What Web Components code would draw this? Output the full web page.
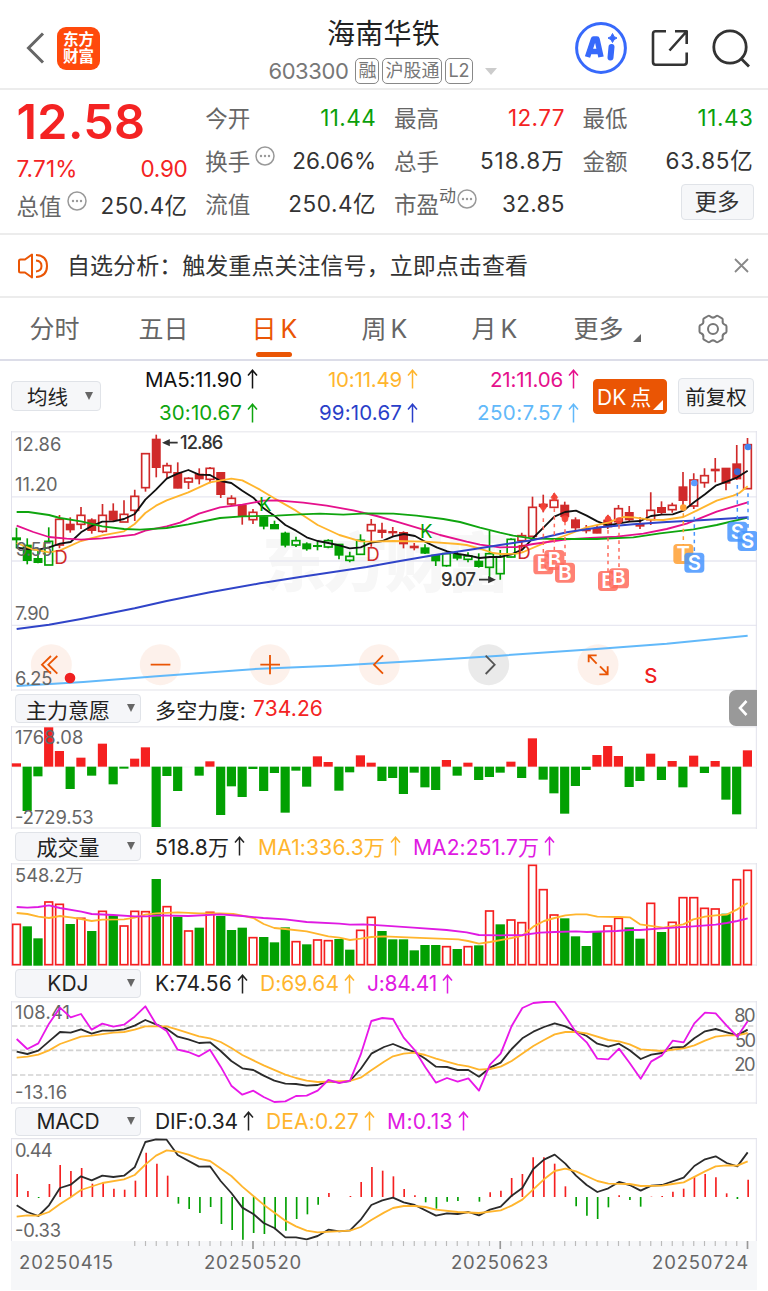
<!DOCTYPE html>
<html lang="zh-CN">
<head>
<meta charset="utf-8">
<title>海南华铁</title>
<style>
  body {
    margin: 0;
    width: 768px;
    height: 1291px;
    overflow: hidden;
    background: #fff;
    color: #333;
    font-family: Inter, "Noto Sans CJK SC", sans-serif;
  }
</style>
</head>
<body>
<stock-app></stock-app>

<script>
// Text that spreads its letter spacing so that it fills a given width
class FitText extends HTMLElement {
  constructor() {
    super();
    this.attachShadow({ mode: "open" });
    this.shadowRoot.innerHTML = `
      <style>
        :host { display: inline-block; white-space: nowrap; flex: none; }
        span { display: inline-block; }
      </style>
      <span><slot></slot></span>`;
  }

  connectedCallback() {
    const width = Number(this.getAttribute("w"));
    const count = this.textContent.length;
    if (!width || !count) return;
    const natural = this.shadowRoot.querySelector("span").getBoundingClientRect().width;
    this.style.letterSpacing = (width - natural) / count + "px";
    this.style.width = width + "px";
  }
}

class UpArrow extends HTMLElement {
  constructor() {
    super();
    this.attachShadow({ mode: "open" });
    this.shadowRoot.innerHTML = `
      <style>
        :host { display: inline-block; width: 11px; height: 20px; flex: none; }
        svg { display: block; }
      </style>
      <svg width="11" height="20" fill="none" stroke="currentColor" stroke-width="1.5">
        <path d="M5.5 19.5V1M1 6.5L5.5 1.2L10 6.5"/>
      </svg>`;
  }
}

class InfoDot extends HTMLElement {
  constructor() {
    super();
    this.attachShadow({ mode: "open" });
    this.shadowRoot.innerHTML = `
      <style>
        :host { display: block; width: 20px; height: 20px; flex: none; }
        svg { display: block; }
      </style>
      <svg width="20" height="20" fill="#999">
        <circle cx="10" cy="10" r="9" fill="none" stroke="#999" stroke-width="1.5"/>
        <circle cx="6" cy="10" r="1.2"/><circle cx="10" cy="10" r="1.2"/><circle cx="14" cy="10" r="1.2"/>
      </svg>`;
  }
}

class StockHeader extends HTMLElement {
  constructor() {
    super();
    this.attachShadow({ mode: "open" });
    this.shadowRoot.innerHTML = `
      <style>
        :host {
          display: grid;
          grid-template-columns: 1fr 260px 1fr;
          height: 90px;
          box-sizing: border-box;
          border-bottom: 2px solid #ececec;
        }
        .left { display: flex; align-items: center; padding: 8px 0 0 26px; gap: 12px; }
        .logo {
          width: 43px; height: 43px; box-sizing: border-box; padding-top: 4px;
          border-radius: 9px; background: #ff4a0c; color: #fff;
          font-size: 15.5px; font-weight: 700; line-height: 17.5px; text-align: center;
        }
        .middle { display: flex; flex-direction: column; align-items: center; padding-top: 14px; }
        .name { font-size: 28px; line-height: 40px; color: #222; margin-left: -1px; }
        .code { display: flex; align-items: center; height: 34px; gap: 3px; font-size: 22px; color: #777; margin-left: -3px; }
        .code > fit-text { margin-right: 4px; }
        .tag {
          height: 26px; line-height: 24px; box-sizing: border-box; padding: 0 2px;
          border: 1.5px solid #888; border-radius: 5px; font-size: 18px;
        }
        .caret { border: 6px solid transparent; border-top: 7px solid #ccc; border-bottom: 0; margin-left: 9px; }
        .right { display: flex; align-items: center; justify-content: flex-end; padding: 8px 17px 0 0; gap: 23px; }
        svg { display: block; flex: none; }
      </style>
      <div class="left">
        <svg width="19" height="32" fill="none" stroke="#666" stroke-width="3"><path d="M17 1.5L2.5 16L17 30.5"/></svg>
        <div class="logo">东方<br>财富</div>
      </div>
      <div class="middle">
        <div class="name"><fit-text w="113">海南华铁</fit-text></div>
        <div class="code">
          <fit-text w="80">603300</fit-text>
          <span class="tag">融</span><span class="tag">沪股通</span><span class="tag">L2</span>
          <i class="caret"></i>
        </div>
      </div>
      <div class="right">
        <svg width="52" height="52" fill="none" stroke="#3769fb" style="margin-right:1px">
          <circle cx="26" cy="26" r="24.4" stroke-width="3"/>
          <path d="M12.5 35L18.5 17H22L26 35M14 29.5H24" stroke-width="5.5" stroke-linejoin="round"/>
          <path d="M36.5 25L35.5 35.5" stroke-width="6" stroke-linecap="round"/>
          <path d="M37.5 11.5Q38.5 15.5 42 16Q38.5 17 37.5 20.5Q36.5 17 33 16Q36.5 15.5 37.5 11.5Z" fill="#3769fb" stroke-width="1"/>
        </svg>
        <svg width="38" height="38" fill="none" stroke="#333" stroke-width="2.6" stroke-linejoin="round">
          <path d="M15 2.3H4.5Q2 2.3 2 5V33Q2 35.7 4.5 35.7H33Q35.7 35.7 35.7 33V23.5M24 2.3H35.7V15M35.5 2.5L18.5 21.5"/>
        </svg>
        <svg width="39" height="39" fill="none" stroke="#333" stroke-width="2.8">
          <circle cx="18" cy="18" r="16.2"/><path d="M29.5 30L37 37.5"/>
        </svg>
      </div>`;
  }
}

class QuoteBoard extends HTMLElement {
  constructor() {
    super();
    this.attachShadow({ mode: "open" });
    this.shadowRoot.innerHTML = `
      <style>
        :host {
          display: grid;
          grid-template-columns: repeat(4, 171px);
          column-gap: 17.7px;
          height: 145px;
          box-sizing: border-box;
          padding: 6px 15px 0 16.5px;
          border-bottom: 2px solid #ececec;
          font-size: 22.5px;
        }
        .row { display: flex; justify-content: space-between; align-items: center; height: 43px; color: #666; }
        .row b { font-weight: 400; color: #333; margin-top: -3px; }
        .label { display: flex; align-items: center; margin-top: -2px; }
        .label info-dot { margin: -8px 0 0 5px; }
        .price { height: 51px; line-height: 51px; font-size: 48.5px; font-weight: 600; color: #f42323; }
        .row .up, .up { color: #f42323; }
        .row .down { color: #0a9f0a; }
        .first .change { height: 43px; }
        .first .row:last-child { height: 31px; }
        sup { font-size: 17px; line-height: 17px; margin-top: -12px; vertical-align: baseline; }
        .label sup + info-dot { margin-left: 1px; }
        button {
          width: 73px; height: 36px; padding: 0; margin-left: auto; font: inherit; color: #333; margin-top: -3px;
          border: 1.5px solid #e0e3e8; border-radius: 4px; background: #f6f7f9; line-height: 30px;
        }
      </style>
      <div class="first">
        <div class="price"><fit-text w="129">12.58</fit-text></div>
        <div class="row change"><fit-text class="up" w="61">7.71%</fit-text><fit-text class="up" w="47">0.90</fit-text></div>
        <div class="row"><span class="label">总值<info-dot></info-dot></span><b><fit-text w="87">250.4亿</fit-text></b></div>
      </div>
      <div>
        <div class="row"><span class="label">今开</span><fit-text class="down" w="56">11.44</fit-text></div>
        <div class="row"><span class="label">换手<info-dot></info-dot></span><fit-text w="84" style="color:#333;margin-top:-1px">26.06%</fit-text></div>
        <div class="row"><span class="label">流值</span><b><fit-text w="88">250.4亿</fit-text></b></div>
      </div>
      <div>
        <div class="row"><span class="label">最高</span><fit-text class="up" w="57">12.77</fit-text></div>
        <div class="row"><span class="label">总手</span><b><fit-text w="85">518.8万</fit-text></b></div>
        <div class="row"><span class="label">市盈<sup>动</sup><info-dot></info-dot></span><fit-text w="63" style="color:#333">32.85</fit-text></div>
      </div>
      <div>
        <div class="row"><span class="label">最低</span><fit-text class="down" w="56">11.43</fit-text></div>
        <div class="row"><span class="label">金额</span><b><fit-text w="88">63.85亿</fit-text></b></div>
        <div class="row"><button>更多</button></div>
      </div>`;
  }
}

class NoticeBar extends HTMLElement {
  constructor() {
    super();
    this.attachShadow({ mode: "open" });
    this.shadowRoot.innerHTML = `
      <style>
        :host {
          display: flex; align-items: center; height: 63px; box-sizing: border-box;
          padding: 0 19px 0 17px; border-bottom: 2px solid #ececec; font-size: 23px; color: #333;
        }
        .text { margin: -4px 0 0 18px; flex: 1; }
      </style>
      <svg width="32" height="26" fill="none" stroke="#ea5504" stroke-width="2">
        <path d="M8 6.5L15 1.5V24.5L8 19.5H3.5Q2 19.5 2 18V8Q2 6.5 3.5 6.5Z" stroke-linejoin="round"/>
        <path d="M19 2Q30 2.5 30 13T19 24M19 7.5Q24.5 8 24.5 13T19 18.5"/>
      </svg>
      <div class="text"><fit-text w="461">自选分析：触发重点关注信号，立即点击查看</fit-text></div>
      <svg width="15" height="15" stroke="#888" stroke-width="1.8"><path d="M1 1L14 14M14 1L1 14"/></svg>`;
  }
}

class PeriodTabs extends HTMLElement {
  constructor() {
    super();
    this.attachShadow({ mode: "open" });
    this.shadowRoot.innerHTML = `
      <style>
        :host {
          display: grid;
          grid-template-columns: 109px 109px 113px 107px 113px 101px 1fr;
          height: 63px; box-sizing: border-box; border-bottom: 2px solid #dcdde8;
          font-size: 25px; color: #666; line-height: 63px; text-align: center; word-spacing: -3px;
        }
        .active { color: #ea5504; position: relative; }
        .active::after {
          content: ""; position: absolute; left: 38px; bottom: 4px;
          width: 36px; height: 5px; border-radius: 3px; background: #ea5504;
        }
        .more { display: flex; justify-content: center; gap: 9px; margin-right: -11px; height: 61px; }
        .more i { align-self: flex-end; margin-bottom: 17px; border: 4px solid; border-color: transparent #666 #666 transparent; }
        .gear { display: flex; align-items: center; justify-content: center; padding: 0 0 0 6px; height: 61px; }
      </style>
      <span>分时</span>
      <span>五日</span>
      <span class="active">日 K</span>
      <span>周 K</span>
      <span>月 K</span>
      <span class="more">更多<i></i></span>
      <span class="gear">
        <svg width="32" height="30" fill="none" stroke="#777" stroke-width="2">
          <path d="M11 2Q12 1.4 13 2.2Q16 5 19 2.2Q20 1.4 21 2L25 4.3Q26 5 25.7 6.2Q25 9.8 28 10.7Q29.5 11.1 29.5 12.4V17.6Q29.5 18.9 28 19.3Q25 20.2 25.7 23.8Q26 25 25 25.7L21 28Q20 28.6 19 27.8Q16 25 13 27.8Q12 28.6 11 28L7 25.7Q6 25 6.3 23.8Q7 20.2 4 19.3Q2.5 18.9 2.5 17.6V12.4Q2.5 11.1 4 10.7Q7 9.8 6.3 6.2Q6 5 7 4.3Z"/>
          <circle cx="16" cy="15" r="5"/>
        </svg>
      </span>`;
  }
}

class MaLegend extends HTMLElement {
  constructor() {
    super();
    this.attachShadow({ mode: "open" });
    this.shadowRoot.innerHTML = `
      <style>
        :host { display: flex; align-items: center; height: 70px; padding: 0 15px 0 11px; font-size: 20.5px; }
        .box {
          display: flex; align-items: center; box-sizing: border-box; flex: none;
          border: 1.5px solid #e0e3e8; border-radius: 4px; background: #f6f7f9; color: #222;
        }
        .select { width: 90px; height: 30px; padding-left: 15px; gap: 17px; }
        .select i { border: 4.5px solid transparent; border-top: 8px solid #666; border-bottom: 0; }
        .values {
          display: grid; grid-template-columns: 157px 160px 161px; grid-template-rows: 33px 34px;
          align-items: center; justify-items: end; width: 478px;
        }
        .values span { display: flex; align-items: center; gap: 5px; }
        .dk {
          width: 74px; height: 35px; margin-left: 14px; padding-left: 3px; color: #fff; background: #ea5504;
          border-color: #ea5504; position: relative; font-size: 21px; word-spacing: -2px;
        }
        .dk::after {
          content: ""; position: absolute; right: 3px; bottom: 3px;
          border: 5px solid; border-color: transparent #fff #fff transparent;
        }
        .adjust { width: 76px; height: 36px; margin-left: 11px; justify-content: center; }
      </style>
      <div class="box select">均线<i></i></div>
      <div class="values">
        <span style="color:#111"><fit-text w="97">MA5:11.90</fit-text><up-arrow></up-arrow></span>
        <span style="color:#ffb52d"><fit-text w="74">10:11.49</fit-text><up-arrow></up-arrow></span>
        <span style="color:#e5108c"><fit-text w="73">21:11.06</fit-text><up-arrow></up-arrow></span>
        <span style="color:#0fa50f"><fit-text w="83">30:10.67</fit-text><up-arrow></up-arrow></span>
        <span style="color:#2a3fc9"><fit-text w="83">99:10.67</fit-text><up-arrow></up-arrow></span>
        <span style="color:#62b9fa"><fit-text w="86">250:7.57</fit-text><up-arrow></up-arrow></span>
      </div>
      <div class="box dk">DK 点</div>
      <div class="box adjust">前复权</div>`;
  }
}

// Title row above a sub chart: a select box, then its readings in the slot
class IndicatorBar extends HTMLElement {
  constructor() {
    super();
    this.attachShadow({ mode: "open" });
    this.shadowRoot.innerHTML = `
      <style>
        :host { display: flex; align-items: center; height: 35px; padding-left: 15px; font-size: 21px; color: #222; }
        :host([short]) { height: 34px; }
        .box {
          display: flex; align-items: center; justify-content: center; position: relative;
          width: 126px; height: 29px; box-sizing: border-box; padding-right: 20px; margin-right: 14px;
          border: 1.5px solid #e0e3e8; border-radius: 4px; background: #f5f6f9; flex: none;
        }
        i {
          position: absolute; right: 5px; top: 9px;
          border: 4.5px solid transparent; border-top: 8px solid #666; border-bottom: 0;
        }
        .values { display: flex; align-items: center; flex: 1; }
      </style>
      <div class="box"><span></span><i></i></div>
      <div class="values"><slot></slot></div>`;
  }

  connectedCallback() {
    this.shadowRoot.querySelector("span").textContent = this.getAttribute("name");
  }
}

// Chart geometry: three units to the pixel, candles 32.25 units apart
const FIRST_X = 49.5;
const STEP = 32.25;
const RED = "#d02a2a";
const GREEN = "#02a002";
const xAt = (i) => FIRST_X + i * STEP;

// kind, high, body top, body bottom, low (capital letter = filled body)
const candles = `G 308 338 345 370|G 340 360 407 418|G 370 400 413 415|g 307 349 420 420|r 270 283 360 370|
R 277 297 315 323|r 246 271 298 312|R 280 284 317 326|r 237 271 319 323|R 235 258 286 288|r 226 268 291 291|
r 194 214 256 288|r 86 86 188 200|R 29 42 128 157|r 113 122 142 160|R 112 142 190 190|r 157 160 171 192|
R 130 147 162 178|r 126 130 163 175|R 142 142 209 219|r 211 220 237 243|R 240 240 272 299|r 252 262 284 297|
G 275 275 304 313|G 287 298 312 312|G 320 324 361 367|g 335 347 360 366|G 352 356 372 377|G 348 361 363 376|
g 343 347 366 370|G 357 357 391 403|g 380 394 406 412|g 328 346 388 388|r 282 299 317 365|R 293 315 323 340|
R 306 319 324 335|R 319 322 357 370|R 354 363 369 376|G 358 368 385 387|G 388 390 408 423|g 384 386 422 425|
G 380 388 400 406|g 382 393 403 412|G 385 408 425 428|g 318 386 427 460|g 375 395 446 464|g 340 343 396 397|
r 323 332 347 372|r 215 247 334 334|R 209 237 245 262|r 205 226 247 247|R 230 240 275 290|R 277 284 309 318|
R 300 312 318 325|R 300 310 325 325|R 270 285 306 312|r 240 251 290 296|R 243 262 285 290|R 276 297 304 312|
r 202 256 284 300|R 229 247 263 270|r 233 241 254 263|R 141 185 227 240|r 145 165 243 252|r 130 152 173 188|
R 99 132 138 172|R 129 129 175 196|R 60 116 162 165|r 39 59 191 191`.split("|").map((row) => row.trim().split(" "));

const force = [220,363,259,112,183,297,203,257,161,283,236,206,172,411,258,303,230,257,214,375,289,321,237,303,249,368,242,290,199,216,302,247,196,218,273,264,312,248,292,300,210,257,218,270,261,248,215,264,145,269,310,371,288,240,195,168,198,291,273,191,270,213,292,197,249,213,329,373,181];

const volume = "281r 289g 325g 214r 221r 282g 263r 303g 242r 256g 286r 242r 243r 147g 228r 260g 301r 293g 245r 258g 300g 293g 321r 321g 337g 292g 333r 343g 328r 330r 327g 359g 299r 260r 303g 328g 328g 361g 345g 345g 348r 357g 348r 346g 241r 283g 268r 276r 104r 177r 253r 265g 319g 348g 306g 286r 263r 292g 326g 218r 306g 275r 201r 201r 233r 235r 251g 147r 119r".split(" ");

const macd = [618,669,690,648,591,609,600,647,643,662,665,638,554,587,623,707,723,735,717,768,786,815,795,798,784,788,753,739,710,675,687,684,642,597,608,625,663,682,703,722,701,699,687,701,673,668,630,618,568,568,587,655,715,743,753,718,682,696,716,686,684,671,662,626,618,628,676,693,635];

const lines = {
  ma5: "50,368 81,372 115,374 147,367 180,356 212,351 243,322 275,303 307,290 340,289 372,282 404,267 436,224 468,194 500,161 533,146 565,135 597,149 630,150 662,168 694,174 727,197 760,218 791,250 823,272 856,300 888,317 920,337 953,348 985,354 1018,361 1049,370 1082,367 1114,353 1147,348 1180,334 1212,327 1245,333 1277,351 1310,367 1342,379 1375,387 1407,392 1439,399 1470,396 1500,396 1534,388 1567,374 1598,340 1631,307 1663,275 1695,261 1728,257 1760,272 1792,289 1823,301 1857,295 1889,290 1921,288 1953,273 1985,269 2018,268 2050,257 2082,232 2115,208 2147,182 2180,170 2212,157 2243,137",
  ma10: "50,354 95,372 147,382 180,376 243,348 307,331 372,319 404,297 436,264 468,242 500,226 565,202 630,172 694,161 727,166 780,194 823,220 888,257 953,300 1018,330 1082,349 1114,350 1180,348 1277,350 1374,357 1400,360 1439,371 1480,384 1503,387 1550,386 1570,381 1630,355 1700,330 1760,307 1823,293 1870,276 1900,277 1950,284 1990,285 2050,276 2090,257 2150,227 2200,212 2218,204 2243,184",
  ma21: "50,302 100,321 147,336 200,341 243,344 307,340 404,329 436,317 500,304 540,293 597,266 660,247 727,239 760,233 790,227 830,226 910,233 980,242 1060,256 1130,273 1200,293 1270,314 1320,330 1400,350 1440,359 1500,367 1550,366 1600,357 1700,343 1770,339 1850,335 1930,326 2000,312 2060,296 2150,260 2243,232",
  ma30: "50,261 85,261 147,270 180,279 243,289 307,304 372,312 420,314 500,309 565,298 660,279 727,274 830,272 900,268 960,266 1030,269 1100,265 1180,266 1250,272 1330,282 1380,291 1440,308 1500,323 1540,332 1600,341 1700,342 1790,342 1900,337 1980,325 2080,313 2150,300 2243,278",
  ma99: "50,612 147,599 243,582 404,550 500,528 630,502 780,475 800,472 900,456 1000,441 1100,426 1200,408 1300,391 1400,376 1500,360 1600,345 1700,322 1800,307 1900,298 2000,291 2100,286 2200,280 2243,277",
  ma250: "50,783 250,771 470,754 780,731 1000,722 1250,708 1500,692 1800,671 2000,656 2243,632",
  vol1: "50,249 82,252 115,260 147,264 180,258 212,262 244,267 275,273 307,269 372,268 404,263 436,254 468,250 533,247 597,250 660,250 700,252 727,257 760,264 791,282 823,294 856,297 920,304 985,319 1018,323 1050,330 1082,326 1114,321 1152,319 1240,323 1375,328 1404,333 1437,341 1470,336 1535,324 1567,317 1600,290 1632,273 1664,264 1696,256 1728,253 1760,253 1792,260 1857,261 1889,262 1920,283 1990,293 2050,283 2080,268 2115,260 2147,256 2180,254 2212,238 2243,219",
  vol2: "50,231 82,233 115,231 147,226 180,234 244,245 275,252 340,255 404,259 440,259 480,256 565,258 660,253 727,258 790,264 856,268 920,276 1018,281 1050,284 1090,283 1152,287 1240,293 1340,300 1400,307 1437,315 1500,316 1567,315 1620,308 1664,306 1728,304 1760,306 1850,303 1889,300 1920,300 1985,295 2080,289 2147,284 2180,279 2212,273 2243,265",
  k: "50,251 82,258 115,248 147,220 180,192 212,194 243,184 275,197 307,188 340,188 372,184 404,173 436,156 468,169 500,182 533,206 565,214 597,225 630,223 662,249 694,279 727,301 760,306 791,323 823,338 856,347 888,348 920,353 953,351 985,340 1018,343 1050,339 1082,303 1114,257 1152,237 1179,228 1211,241 1244,252 1276,272 1308,296 1341,297 1373,306 1405,306 1437,326 1470,299 1502,284 1535,243 1567,211 1600,191 1632,177 1664,166 1696,175 1728,190 1760,204 1792,227 1825,236 1857,227 1889,247 1922,273 1954,260 1986,255 2018,238 2051,237 2083,211 2115,190 2147,183 2180,193 2212,202 2243,185",
  d: "50,269 82,266 115,260 147,247 180,228 243,206 275,203 340,194 372,192 404,185 436,175 500,175 533,185 597,205 630,211 662,222 694,240 727,261 791,292 856,320 888,330 920,338 953,342 1050,339 1082,329 1114,307 1152,281 1179,265 1211,257 1244,254 1276,261 1308,272 1373,290 1405,295 1437,305 1470,303 1502,296 1535,279 1600,234 1632,216 1664,199 1696,192 1728,192 1760,196 1825,216 1857,220 1889,229 1922,244 1986,249 2051,241 2083,232 2115,218 2147,206 2180,202 2212,202 2243,195",
  j: "50,213 82,243 115,226 147,167 180,119 212,148 243,138 275,185 307,167 340,176 372,170 404,146 436,115 468,168 500,189 533,245 565,252 597,265 630,245 662,296 694,353 727,380 760,368 791,387 823,402 856,400 888,384 920,383 953,368 985,336 1018,345 1050,338 1082,260 1114,159 1147,150 1179,153 1211,209 1244,246 1276,298 1308,344 1341,330 1373,341 1405,331 1437,368 1470,290 1502,257 1535,174 1567,120 1600,105 1632,102 1664,101 1696,145 1728,193 1760,223 1792,272 1825,274 1857,242 1889,285 1922,332 1954,280 1986,262 2018,218 2051,223 2083,166 2115,134 2147,136 2180,173 2212,206 2243,160",
  dif: "50,712 82,732 115,744 147,712 180,660 212,650 243,625 275,637 307,623 340,627 372,623 404,598 436,522 468,514 500,515 533,561 597,596 630,595 662,639 694,675 727,719 760,738 791,765 823,780 856,808 888,808 920,814 953,804 985,785 1018,790 1050,787 1082,755 1114,711 1147,697 1179,689 1211,703 1244,711 1308,743 1341,736 1373,738 1405,732 1437,742 1470,725 1502,716 1535,683 1567,660 1600,603 1632,575 1664,560 1696,587 1728,623 1760,651 1792,672 1825,661 1857,642 1889,651 1922,668 1954,653 1986,651 2051,629 2083,594 2115,574 2147,565 2180,585 2212,595 2243,553",
  dea: "50,746 82,742 115,743 147,732 180,708 212,688 243,666 307,645 372,634 404,621 436,590 468,563 500,547 533,551 565,560 597,572 630,579 694,624 727,656 791,710 856,758 888,775 920,788 953,793 1050,788 1082,777 1114,756 1152,734 1179,720 1211,714 1244,714 1276,717 1308,725 1373,732 1437,735 1502,727 1535,713 1567,695 1632,634 1664,609 1696,602 1728,610 1792,639 1825,647 1889,648 1922,654 1986,653 2018,648 2051,643 2115,610 2147,595 2180,592 2212,593 2243,580",
};

const line = (name, color, width = 5.5) =>
  `<polyline points="${lines[name]}" fill="none" stroke="${color}" stroke-width="${width}" stroke-linejoin="round"/>`;

const label = (x, y, text, width) =>
  `<text x="${x}" y="${y}" font-size="55" fill="#666" textLength="${width}">${text}</text>`;

const frame = (top, height) =>
  `<path d="M33 ${top + 2}H2271M33 ${top + height - 3}H2271" stroke="#ededf1" stroke-width="5"/>
   <path d="M34.5 ${top}V${top + height}M2269 ${top}V${top + height}" stroke="#e2e2ec" stroke-width="3"/>`;

const charts = {
  price: {
    top: 18,
    height: 780,
    draw() {
      const sticks = candles.map(([kind, high, top, bottom, low], i) => {
        const x = xAt(i);
        const color = kind.toLowerCase() === "r" ? RED : GREEN;
        if (kind === "R" || kind === "G") {
          return `<path d="M${x} ${high}V${low}" stroke="${color}" stroke-width="5"/>
            <rect x="${x - 13.5}" y="${top - 1}" width="27" height="${Math.max(6, bottom - top + 2)}" fill="${color}"/>`;
        }
        return `<path d="M${x} ${high}V${top}M${x} ${bottom}V${low}" stroke="${color}" stroke-width="5"/>
          <rect x="${x - 11.5}" y="${top}" width="23" height="${bottom - top}" fill="none" stroke="${color}" stroke-width="5"/>`;
      }).join("");

      const dash = (x, y1, y2, color) =>
        `<path d="M${x} ${y1}V${y2}" stroke="${color}" stroke-width="4.5" stroke-dasharray="11 12"/>`;
      const badge = (x, y, letter, color) =>
        `<rect x="${x - 30}" y="${y - 30}" width="60" height="60" rx="11" fill="${color}" fill-opacity=".85"/>
         <text x="${x}" y="${y + 21}" font-size="61" font-weight="600" fill="#fff" text-anchor="middle">${letter}</text>`;
      const dot = (x, y, color, r = 10) => `<circle cx="${x}" cy="${y}" r="${r}" fill="${color}"/>`;
      const pink = "#ff6b5c";
      const blue = "#4795ff";
      const orange = "#ffa033";
      const disc = (x, fill = "#fdf0e9") => `<circle cx="${x}" cy="719" r="61.5" fill="${fill}" fill-opacity=".9"/>`;

      return `
        <text x="786" y="484" font-size="192" font-weight="900" fill="#f7f7f7" textLength="744">东方财富</text>
        <path d="M33 215.5H2271M33 408H2271M33 601H2271" stroke="#e8e8f1" stroke-width="4"/>
        ${frame(18, 780)}
        ${disc(154)}${disc(481)}${disc(810)}${disc(1138)}${disc(1466, "#e8e8e8")}${disc(1794)}
        ${sticks}
        ${line("ma5", "#111")}${line("ma10", "#ffb52d")}${line("ma21", "#e5108c")}
        ${line("ma30", "#0fa50f")}${line("ma99", "#3044c8", 6)}${line("ma250", "#62b9fa", 6)}
        ${label(45, 79, "12.86", 139)}${label(45, 197, "11.20", 128)}${label(47, 392, "9.55", 110)}
        ${label(45, 586, "7.90", 104)}${label(45, 779, "6.25", 112)}
        ${dash(1630, 280, 390, pink)}${dash(1663, 250, 375, pink)}${dash(1695, 290, 415, pink)}
        ${dash(1824, 315, 440, pink)}${dash(1857, 300, 430, pink)}
        ${dash(2050, 265, 360, orange)}${dash(2083, 275, 385, blue)}
        ${dash(2212, 180, 292, blue)}${dash(2244, 205, 320, blue)}
        <g fill="#f44336" fill-opacity=".9">
          <path d="M1663 202L1675 218H1651ZM1630 262L1642 245H1618ZM1695 294L1707 275H1683ZM1824 268L1836 284H1812Z"/>
          <circle cx="1663" cy="219" r="9"/><circle cx="1630" cy="243" r="9"/><circle cx="1695" cy="281" r="10"/>
          <circle cx="1824" cy="281" r="9"/><circle cx="1857" cy="287" r="10"/>
        </g>
        ${dot(2050, 248, orange)}${dot(2083, 174, "#5b9cff")}${dot(2212, 140, "#3c68d2")}${dot(2244, 66, "#4285f0")}
        ${badge(1630, 418, "B", pink)}${badge(1663, 405, "B", pink)}${badge(1695, 443, "B", pink)}
        ${badge(1824, 468, "B", pink)}${badge(1857, 460, "B", pink)}
        ${badge(2050, 387, "T", orange)}${badge(2083, 413, "S", blue)}
        ${badge(2212, 320, "S", blue)}${badge(2243, 348, "S", blue)}
        <g font-size="56" fill="${RED}">
          <text x="163" y="417">D</text><text x="1099" y="408">D</text><text x="1552" y="401">D</text>
          <g fill="${GREEN}"><text x="777" y="259">K</text><text x="1260" y="340">K</text></g>
        </g>
        <path d="M492 53H533M492 53L507 46V60Z" stroke="#333" stroke-width="5" fill="#333"/>
        <text x="540" y="73" font-size="55" font-weight="500" fill="#333" textLength="130">12.86</text>
        <text x="1323" y="484" font-size="55" font-weight="500" fill="#333" textLength="105">9.07</text>
        <path d="M1437 464H1480M1482 464L1467 457V471Z" stroke="#333" stroke-width="5" fill="#333"/>
        <g fill="none" stroke="#ea5504" stroke-width="5.5">
          <path d="M153 693L126 719L153 746M172 693L145 719L172 746M452 719H511M781 719H840M810 690V748M1149 691L1122 719L1149 746"/>
          <path d="M1790 716L1767 692M1766 712V691H1790M1800 724L1823 747M1823 724V748H1798"/>
        </g>
        <path d="M1457 692L1484 719L1457 747" fill="none" stroke="#555" stroke-width="5.5"/>
        <circle cx="210" cy="759" r="16" fill="#f02020"/>
        <text x="1933" y="773" font-size="61" font-weight="500" fill="#f02020" textLength="39">S</text>`;
    },
  },
  force: {
    top: 108,
    height: 309,
    draw() {
      const bars = force.map((y, i) =>
        `<rect x="${xAt(i) - 14}" y="${Math.min(y, 230)}" width="27.5" height="${Math.abs(y - 230)}" fill="${y < 230 ? "#f52020" : GREEN}"/>`
      ).join("");
      return `${frame(108, 309)}<path d="M33 231H2271" stroke="#f4f4f6" stroke-width="3"/>
        ${bars}${label(45, 161, "1768.08", 205)}${label(45, 403, "-2729.53", 236)}`;
    },
  },
  volume: {
    top: 99,
    height: 309,
    draw() {
      const bars = volume.map((item, i) => {
        const y = parseInt(item, 10);
        return item.endsWith("r")
          ? `<rect x="${xAt(i) - 11.5}" y="${y + 2}" width="23" height="${402 - y}" fill="#fff" stroke="#f52020" stroke-width="5"/>`
          : `<rect x="${xAt(i) - 14}" y="${y}" width="28" height="${407 - y}" fill="${GREEN}"/>`;
      }).join("");
      return `${frame(99, 309)}${bars}${line("vol1", "#ffb52d")}${line("vol2", "#df1ae2")}
        ${label(45, 155, "548.2万", 206)}`;
    },
  },
  kdj: {
    top: 99,
    height: 309,
    draw() {
      return `${frame(99, 309)}
        <path d="M36 174H2268M36 247H2268M36 321H2268" stroke="#d2d2d2" stroke-width="5" stroke-dasharray="16 8"/>
        ${label(45, 153, "108.41", 165)}${label(45, 394, "-13.16", 156)}
        ${label(2203, 161, "80", 64)}${label(2205, 236, "50", 63)}${label(2203, 309, "20", 64)}
        ${line("k", "#2b2b2b")}${line("d", "#ffb52d")}${line("j", "#e818e8")}`;
    },
  },
  macd: {
    top: 510,
    height: 309,
    draw() {
      const bars = macd.map((y, i) =>
        `<path d="M${xAt(i) + 2} 687V${y}" stroke="${y < 687 ? "#f52020" : GREEN}" stroke-width="5"/>`
      ).join("");
      return `<path d="M33 512H2271" stroke="#e4e4ea" stroke-width="4"/>
        <path d="M34.5 510V819M2269 510V819" stroke="#e2e2ec" stroke-width="3"/>
        ${bars}${line("dif", "#2b2b2b")}${line("dea", "#ffb52d")}
        ${label(45, 566, "0.44", 113)}${label(45, 806, "-0.33", 138)}`;
    },
  },
};

class ChartPanel extends HTMLElement {
  constructor() {
    super();
    this.attachShadow({ mode: "open" });
  }

  connectedCallback() {
    const chart = charts[this.getAttribute("type")];
    this.shadowRoot.innerHTML = `
      <style>
        :host { display: block; margin-left: 11px; }
        svg { display: block; overflow: hidden; }
      </style>
      <svg width="746" height="${chart.height / 3}" viewBox="33 ${chart.top} 2238 ${chart.height}">${chart.draw()}</svg>`;
  }
}

class DateAxis extends HTMLElement {
  constructor() {
    super();
    this.attachShadow({ mode: "open" });
    let ticks = "";
    for (let i = 11; i < 69; i++) {
      const major = i === 22 || i === 45 || i === 68;
      ticks += `<path d="M${xAt(i)} 0V${major ? 24 : 15}" stroke="${major ? "#999" : "#bbb"}" stroke-width="${major ? 5 : 3.5}"/>`;
    }
    this.shadowRoot.innerHTML = `
      <style>
        :host { display: block; width: 746px; height: 49px; margin-left: 11px; background: #f6f7f9; }
        svg { display: block; }
        div { display: grid; grid-template-columns: 185px 247px 201px 97px; padding-left: 8px; font-size: 18.5px; line-height: 26px; color: #666; }
      </style>
      <svg width="746" height="8" viewBox="33 0 2238 24">${ticks}</svg>
      <div>
        <fit-text w="95">20250415</fit-text>
        <fit-text w="98">20250520</fit-text>
        <fit-text w="98">20250623</fit-text>
        <fit-text w="97">20250724</fit-text>
      </div>`;
  }
}

class StockApp extends HTMLElement {
  constructor() {
    super();
    this.attachShadow({ mode: "open" });
    this.shadowRoot.innerHTML = `
      <style>
        :host { display: block; }
        indicator-bar span { display: flex; align-items: center; gap: 5px; }
        .red { color: #f42323; }
        .orange { color: #ffb52d; }
        .purple { color: #df1ae2; }
        .toggle {
          width: 28px; height: 36px; margin: -1px 11px 0 auto; border-radius: 7px 0 0 7px;
          background: #999; display: flex; align-items: center; justify-content: center;
        }
      </style>
      <stock-header></stock-header>
      <quote-board></quote-board>
      <notice-bar></notice-bar>
      <period-tabs></period-tabs>
      <ma-legend></ma-legend>
      <chart-panel type="price"></chart-panel>
      <indicator-bar name="主力意愿">
        <fit-text w="91">多空力度:</fit-text><fit-text class="red" w="70" style="margin-left:7px">734.26</fit-text>
        <div class="toggle"><svg width="12" height="18" fill="none" stroke="#fff" stroke-width="2.6"><path d="M9.5 2L3 9L9.5 16"/></svg></div>
      </indicator-bar>
      <chart-panel type="force"></chart-panel>
      <indicator-bar short name="成交量">
        <span><fit-text w="74">518.8万</fit-text><up-arrow></up-arrow></span>
        <span class="orange" style="margin-left:13px"><fit-text w="127">MA1:336.3万</fit-text><up-arrow></up-arrow></span>
        <span class="purple" style="margin-left:12px"><fit-text w="126">MA2:251.7万</fit-text><up-arrow></up-arrow></span>
      </indicator-bar>
      <chart-panel type="volume"></chart-panel>
      <indicator-bar name="KDJ">
        <span><fit-text w="77">K:74.56</fit-text><up-arrow></up-arrow></span>
        <span class="orange" style="margin-left:12px"><fit-text w="79">D:69.64</fit-text><up-arrow></up-arrow></span>
        <span class="purple" style="margin-left:12px"><fit-text w="70">J:84.41</fit-text><up-arrow></up-arrow></span>
      </indicator-bar>
      <chart-panel type="kdj"></chart-panel>
      <indicator-bar short name="MACD">
        <span><fit-text w="83">DIF:0.34</fit-text><up-arrow></up-arrow></span>
        <span class="orange" style="margin-left:12px"><fit-text w="93">DEA:0.27</fit-text><up-arrow></up-arrow></span>
        <span class="purple" style="margin-left:12px"><fit-text w="66">M:0.13</fit-text><up-arrow></up-arrow></span>
      </indicator-bar>
      <chart-panel type="macd"></chart-panel>
      <date-axis></date-axis>`;
  }
}

customElements.define("fit-text", FitText);
customElements.define("up-arrow", UpArrow);
customElements.define("info-dot", InfoDot);
customElements.define("stock-header", StockHeader);
customElements.define("quote-board", QuoteBoard);
customElements.define("notice-bar", NoticeBar);
customElements.define("period-tabs", PeriodTabs);
customElements.define("ma-legend", MaLegend);
customElements.define("indicator-bar", IndicatorBar);
customElements.define("chart-panel", ChartPanel);
customElements.define("date-axis", DateAxis);
customElements.define("stock-app", StockApp);
</script>
</body>
</html>
